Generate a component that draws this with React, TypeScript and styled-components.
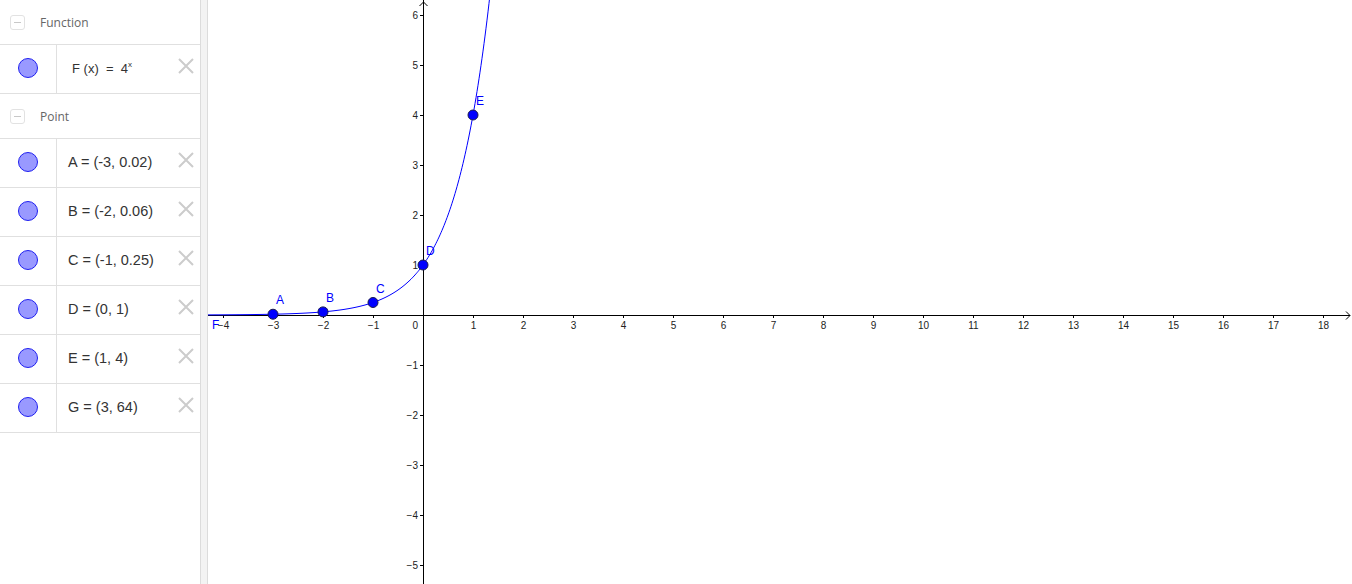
import React from "react";
import styled, { createGlobalStyle } from "styled-components";

const Global = createGlobalStyle`
  html, body { margin: 0; padding: 0; background: #fff; }
  body { font-family: "Liberation Sans", Arial, sans-serif; overflow: hidden; }
`;

const Page = styled.div`
  display: flex;
  width: 1352px;
  height: 584px;
  background: #fff;
`;

const Sidebar = styled.div`
  width: 200px;
  flex: none;
  display: flex;
  flex-direction: column;
`;

const Splitter = styled.div`
  width: 6px;
  flex: none;
  background: #f3f3f3;
  border-left: 1px solid #dcdcdc;
  border-right: 1px solid #dcdcdc;
`;

const Canvas = styled.div`
  flex: 1;
  position: relative;
`;

const GroupHeader = styled.div`
  height: 45px;
  display: flex;
  align-items: center;
  border-bottom: 1px solid #e0e0e0;
  box-sizing: border-box;
  padding-left: 10px;
  padding-top: 1px;
  gap: 15px;
  color: #666;
  font-family: "Open Sans", "Liberation Sans", sans-serif;
  font-size: 12px;
`;

const Collapse = styled.div`
  width: 13px;
  height: 13px;
  border: 1px solid #e2e2e2;
  border-radius: 3px;
  display: flex;
  align-items: center;
  justify-content: center;
  &::after {
    content: "";
    width: 7px;
    height: 1px;
    background: #c8c8c8;
  }
`;

const Row = styled.div`
  height: 49px;
  display: flex;
  border-bottom: 1px solid #e0e0e0;
  box-sizing: border-box;
`;

const MarbleCell = styled.div`
  width: 57px;
  flex: none;
  border-right: 1px solid #e0e0e0;
  box-sizing: border-box;
  display: flex;
  align-items: center;
  justify-content: center;
  padding-right: 1px;
  padding-bottom: 2px;
`;

const Marble = styled.div`
  width: 18px;
  height: 18px;
  border-radius: 50%;
  background: #9999ff;
  border: 1px solid #2020f0;
`;

const Content = styled.div`
  flex: 1;
  display: flex;
  align-items: center;
  padding-left: 11px;
  padding-bottom: 3px;
  color: #333;
  font-family: "Liberation Sans", Arial, sans-serif;
  font-size: 14.5px;
  position: relative;
`;

const FuncText = styled.span`
  font-family: "Liberation Sans", Arial, sans-serif;
  font-size: 13px;
  color: #333;
  padding-left: 4px;
  white-space: pre;
  sup { font-size: 8px; vertical-align: 6px; }
`;

const Close = styled.div`
  position: absolute;
  right: 6px;
  top: 13px;
  width: 16px;
  height: 16px;
`;

const CloseIcon = () => (
  <Close>
    <svg width="16" height="16" viewBox="0 0 16 16">
      <path d="M1 1 L15 15 M15 1 L1 15" stroke="#cccccc" strokeWidth="2" />
    </svg>
  </Close>
);

const points = [
  { n: "A", t: "A = (-3, 0.02)" },
  { n: "B", t: "B = (-2, 0.06)" },
  { n: "C", t: "C = (-1, 0.25)" },
  { n: "D", t: "D = (0, 1)" },
  { n: "E", t: "E = (1, 4)" },
  { n: "G", t: "G = (3, 64)" },
];

const W = 1144;
const H = 584;
const OX = 215;
const OY = 315;
const U = 50;
const sx = (x: number) => OX + x * U;
const sy = (y: number) => OY - y * U;

function curvePath() {
  const pts: string[] = [];
  for (let px = 0; px <= 300; px += 1) {
    const x = (px - OX) / U;
    const y = Math.pow(4, x);
    const py = sy(y);
    pts.push(`${px === 0 ? "M" : "L"}${px.toFixed(1)} ${py.toFixed(2)}`);
    if (py < -5) break;
  }
  return pts.join(" ");
}

const Graph = () => {
  const xs: number[] = [];
  for (let i = -4; i <= 18; i++) if (i !== 0) xs.push(i);
  const ys: number[] = [];
  for (let j = -5; j <= 6; j++) if (j !== 0) ys.push(j);
  const fmt = (v: number) => (v < 0 ? `\u2212${-v}` : `${v}`);
  const gp = [
    { n: "A", x: -3 },
    { n: "B", x: -2 },
    { n: "C", x: -1 },
    { n: "D", x: 0 },
    { n: "E", x: 1 },
  ];
  return (
    <svg width={W} height={H} style={{ display: "block" }}>
      <g fontFamily="'Liberation Sans', Arial, sans-serif" fontSize="10" fill="#222">
        <line x1={0} y1={OY + 0.5} x2={W - 2} y2={OY + 0.5} stroke="#000" strokeWidth="1" />
        <path d={`M${W - 6} ${OY - 3.5} L${W - 2} ${OY + 0.5} L${W - 6} ${OY + 4.5}`} stroke="#000" fill="none" />
        <line x1={OX + 0.5} y1={0} x2={OX + 0.5} y2={H} stroke="#000" strokeWidth="1" />
        <path d={`M${OX - 3.5} 6 L${OX + 0.5} 2 L${OX + 4.5} 6`} stroke="#000" fill="none" />
        {xs.map((i) => (
          <g key={"x" + i}>
            <line x1={sx(i) + 0.5} y1={OY} x2={sx(i) + 0.5} y2={OY + 3} stroke="#000" />
            <text x={sx(i) + 0.5} y={OY + 14} textAnchor="middle">{fmt(i)}</text>
          </g>
        ))}
        <text x={OX - 5} y={OY + 14} textAnchor="end">0</text>
        {ys.map((j) => (
          <g key={"y" + j}>
            <line x1={OX - 3} y1={sy(j) + 0.5} x2={OX} y2={sy(j) + 0.5} stroke="#000" />
            <text x={OX - 5} y={sy(j) + 4} textAnchor="end">{fmt(j)}</text>
          </g>
        ))}
      </g>
      <path d={curvePath()} stroke="#0000ff" strokeWidth="1" fill="none" />
      <g fontFamily="'Liberation Sans', Arial, sans-serif" fontSize="12" fill="#0000ff">
        <text x={4} y={329}>F</text>
        {gp.map((p) => {
          const cx = sx(p.x);
          const cy = sy(Math.pow(4, p.x));
          return (
            <g key={p.n}>
              <circle cx={cx} cy={cy} r={5} fill="#0000ff" stroke="#1a1a50" strokeWidth="1" />
              <text x={cx + 3} y={cy - 10}>{p.n}</text>
            </g>
          );
        })}
      </g>
    </svg>
  );
};

export default function App() {
  return (
    <>
      <Global />
      <Page>
        <Sidebar>
          <GroupHeader>
            <Collapse />
            <span>Function</span>
          </GroupHeader>
          <Row>
            <MarbleCell>
              <Marble />
            </MarbleCell>
            <Content>
              <FuncText>
                {"F (x)  =  4"}<sup>x</sup>
              </FuncText>
              <CloseIcon />
            </Content>
          </Row>
          <GroupHeader>
            <Collapse />
            <span>Point</span>
          </GroupHeader>
          {points.map((p) => (
            <Row key={p.n}>
              <MarbleCell>
                <Marble />
              </MarbleCell>
              <Content>
                {p.t}
                <CloseIcon />
              </Content>
            </Row>
          ))}
        </Sidebar>
        <Splitter />
        <Canvas>
          <Graph />
        </Canvas>
      </Page>
    </>
  );
}
